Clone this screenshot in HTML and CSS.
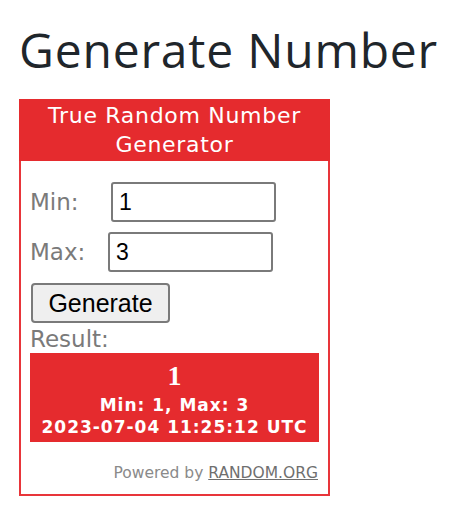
FILE: index.html
```html
<!DOCTYPE html>
<html>
<head>
<meta charset="utf-8">
<link rel="stylesheet" href="styles.css">
</head>
<body>
<div class="page">
  <h1 class="title">Generate Number</h1>
  <div class="widget">
    <div class="widget-head">True Random Number<br>Generator</div>
    <div class="widget-body">
      <div class="field">
        <span class="label label-min">Min:</span>
        <input class="num" type="text" value="1">
      </div>
      <div class="field">
        <span class="label label-max">Max:</span>
        <input class="num" type="text" value="3">
      </div>
      <button class="gen">Generate</button>
      <div class="result-label">Result:</div>
      <div class="result">
        <div class="result-num">1</div>
        <div class="result-meta result-meta-first">Min: 1, Max: 3</div>
        <div class="result-meta">2023-07-04 11:25:12 UTC</div>
      </div>
      <div class="powered">Powered by <a href="#" class="powered-link">RANDOM.ORG</a></div>
    </div>
  </div>
</div>
</body>
</html>
```

FILE: styles.css
```css
html, body {
  margin: 0;
  padding: 0;
  background: #ffffff;
}
.page {
  padding: 18px 0 0 19px;
}
.title {
  margin: 0 0 17px 0;
  font-family: "Open Sans", "DejaVu Sans", sans-serif;
  font-weight: 500;
  font-size: 48px;
  line-height: 64px;
  color: #1f262b;
  letter-spacing: 0.8px;
}
.widget {
  width: 307px;
  border: 2px solid #e8353a;
  border-top: 0;
  font-family: "DejaVu Sans", Verdana, sans-serif;
}
.widget-head {
  background: #e52b2e;
  color: #ffffff;
  text-align: center;
  font-size: 22px;
  line-height: 29px;
  letter-spacing: 0.7px;
  padding: 2px 0 2px 0;
  margin: 0 -2px;
}
.widget-body {
  padding: 21px 9px 12px 9px;
  display: flex;
  flex-direction: column;
  align-items: flex-start;
}
.field {
  display: flex;
  align-items: center;
  margin-bottom: 10px;
}
.label {
  color: #7a7a7a;
  font-size: 23px;
  line-height: 27px;
}
.label-min { width: 81px; }
.label-max { width: 78px; }
.num {
  box-sizing: border-box;
  width: 165px;
  height: 40px;
  border: 2px solid #7a7a7a;
  border-radius: 3px;
  padding: 0 0 0 6px;
  font-family: "Liberation Sans", Arial, sans-serif;
  font-size: 23px;
  color: #000;
  background: #fff;
  outline: none;
}
.gen {
  box-sizing: border-box;
  width: 139px;
  height: 40px;
  margin: 1px 0 0 1px;
  border: 2px solid #7a7a7a;
  border-radius: 4px;
  background: #efefef;
  font-family: "Liberation Sans", Arial, sans-serif;
  font-size: 25px;
  color: #000;
  padding: 0;
}
.result-label {
  color: #7a7a7a;
  font-size: 23px;
  line-height: 27px;
  margin-top: 3px;
}
.result {
  align-self: stretch;
  background: #e52b2e;
  color: #fff;
  text-align: center;
  padding: 6px 0 4px 0;
}
.result-num {
  font-family: "Liberation Serif", "Times New Roman", serif;
  font-weight: bold;
  font-size: 28px;
  line-height: 33px;
}
.result-meta {
  font-weight: bold;
  font-size: 17px;
  line-height: 22px;
  letter-spacing: 1px;
}
.result-meta-first {
  margin-top: 2px;
}
.powered {
  align-self: flex-end;
  margin-top: 22px;
  margin-right: 1px;
  color: #8a8a8a;
  font-size: 15.5px;
  line-height: 18px;
}
.powered-link {
  color: #6f6f6f;
  text-decoration: underline;
}
```
